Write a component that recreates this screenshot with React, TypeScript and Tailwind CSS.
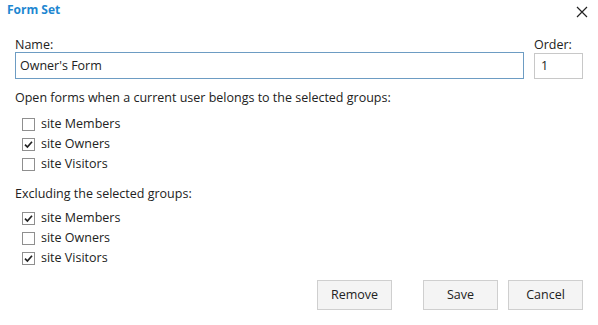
import React from 'react';

const font = { fontFamily: '"Open Sans", "Noto Sans", sans-serif' };

const Check = ({ checked, label }: { checked?: boolean; label: string }) => (
  <label className="h-5 flex items-center gap-[6px] pl-[7px] text-[12.5px] text-[#222]">
    <span className="w-[13px] h-[13px] border border-[#8f8f8f] bg-white flex items-center justify-center">
      {checked && (
        <svg width="9" height="9" viewBox="0 0 9 9">
          <path d="M1 4.6 L3.4 7 L8 1.8" fill="none" stroke="#222" strokeWidth="1.7" />
        </svg>
      )}
    </span>
    <span>{label}</span>
  </label>
);

const Btn = ({ children }: { children: React.ReactNode }) => (
  <button className="h-[30px] w-[75px] border border-[#cfcfcf] bg-[#f4f4f4] text-[12.5px] text-[#222]">
    {children}
  </button>
);

export default function App() {
  return (
    <div className="w-[598px] h-[325px] bg-white relative" style={font}>
      <div className="h-[38px] flex items-start justify-between pl-[7px] pr-[10px]">
        <span className="text-[12px] font-bold text-[#1e87d1] leading-5">Form Set</span>
        <svg width="12" height="12" viewBox="0 0 12 12" className="mt-[6px]">
          <path d="M1 1 L11 11 M11 1 L1 11" stroke="#222" strokeWidth="1.2" />
        </svg>
      </div>

      <div className="px-[15px]">
        <div className="flex gap-[10px]">
          <div className="flex-1">
            <div className="text-[12.5px] leading-[14px] text-[#222]">Name:</div>
            <input
              defaultValue="Owner's Form"
              className="mt-0 w-full h-[27px] border border-[#6d9cc3] px-[4px] text-[12.5px] text-[#222] outline-none"
            />
          </div>
          <div className="w-[49px]">
            <div className="text-[12.5px] leading-[14px] text-[#222]">Order:</div>
            <input
              defaultValue="1"
              className="w-full h-[26px] border border-[#c8c8c8] px-[6px] text-[12.5px] text-[#222] outline-none"
            />
          </div>
        </div>

        <div className="mt-[11px] text-[12.5px] leading-4 text-[#222]">
          Open forms when a current user belongs to the selected groups:
        </div>
        <div className="mt-[8px]">
          <Check label="site Members" />
          <Check checked label="site Owners" />
          <Check label="site Visitors" />
        </div>

        <div className="mt-[12px] text-[12.5px] leading-4 text-[#222]">Excluding the selected groups:</div>
        <div className="mt-[6px]">
          <Check checked label="site Members" />
          <Check label="site Owners" />
          <Check checked label="site Visitors" />
        </div>

        <div className="mt-[12px] flex justify-end">
          <Btn>Remove</Btn>
          <div className="ml-[31px] flex gap-[10px]">
            <Btn>Save</Btn>
            <Btn>Cancel</Btn>
          </div>
        </div>
      </div>
    </div>
  );
}
